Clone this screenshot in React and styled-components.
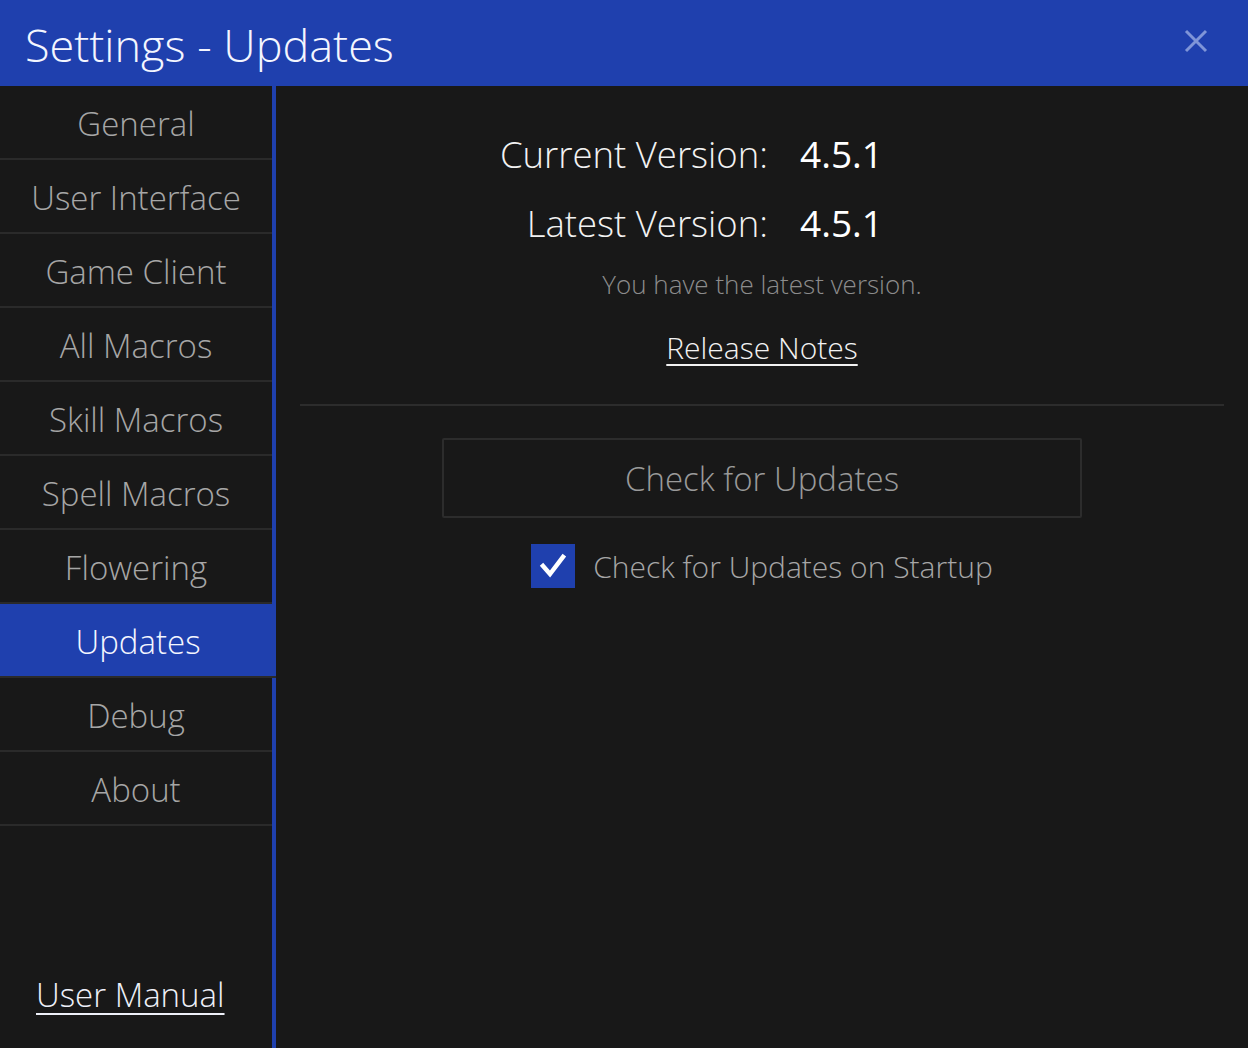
import { styled, createGlobalStyle } from "styled-components";

const GlobalStyle = createGlobalStyle`
  html, body {
    margin: 0;
    padding: 0;
    background: #181818;
  }
  body {
    font-family: "Open Sans", "Noto Sans", sans-serif;
    font-weight: 300;
  }
`;

const navItems = [
  "General",
  "User Interface",
  "Game Client",
  "All Macros",
  "Skill Macros",
  "Spell Macros",
  "Flowering",
  "Updates",
  "Debug",
  "About",
];

export default function App() {
  const active = "Updates";
  return (
    <Window>
      <GlobalStyle />
      <Header>
        <Title>Settings - Updates</Title>
        <CloseButton aria-label="close">
          <svg width="24" height="24" viewBox="0 0 24 24">
            <path
              d="M2 2 L22 22 M22 2 L2 22"
              stroke="#7f95d8"
              strokeWidth="3"
              fill="none"
            />
          </svg>
        </CloseButton>
      </Header>
      <Body>
        <Sidebar>
          <NavList>
            {navItems.map((item) => (
              <NavItem key={item} $active={item === active}>
                {item}
              </NavItem>
            ))}
          </NavList>
          <ManualLink>User Manual</ManualLink>
        </Sidebar>
        <Content>
          <Versions>
            <Label>Current Version:</Label>
            <Value>4.5.1</Value>
            <Label>Latest Version:</Label>
            <Value>4.5.1</Value>
          </Versions>
          <Status>You have the latest version.</Status>
          <NotesLink>Release Notes</NotesLink>
          <Divider />
          <CheckButton>Check for Updates</CheckButton>
          <CheckRow>
            <Box>
              <svg width="30" height="30" viewBox="0 0 30 30">
                <path
                  d="M5 15 L12 23 L25 6"
                  stroke="#ffffff"
                  strokeWidth="4.5"
                  fill="none"
                  strokeLinecap="square"
                />
              </svg>
            </Box>
            <CheckLabel>Check for Updates on Startup</CheckLabel>
          </CheckRow>
        </Content>
      </Body>
    </Window>
  );
}

const Window = styled.div`
  display: flex;
  flex-direction: column;
  width: 100vw;
  height: 100vh;
  overflow: hidden;
  background: #181818;
`;

const Header = styled.div`
  display: flex;
  align-items: center;
  justify-content: space-between;
  height: 86px;
  padding: 0 40px 0 25px;
  background: #1f40ae;
  flex-shrink: 0;
`;

const Title = styled.div`
  color: #f4f6ff;
  font-size: 45px;
  font-weight: 300;
  margin-top: 2px;
`;

const CloseButton = styled.div`
  display: flex;
  margin-top: -4px;
`;

const Body = styled.div`
  flex: 1;
  display: flex;
  min-height: 0;
`;

const Sidebar = styled.div`
  width: 272px;
  border-right: 4px solid #1f40ae;
  display: flex;
  flex-direction: column;
  justify-content: space-between;
`;

const NavList = styled.div`
  display: flex;
  flex-direction: column;
`;

const NavItem = styled.div`
  height: 74px;
  padding-top: 3px;
  box-sizing: border-box;
  display: flex;
  align-items: center;
  justify-content: center;
  font-size: 33px;
  font-weight: 300;
  color: ${(p) => (p.$active ? "#f4f6ff" : "#a6a6a6")};
  background: ${(p) => (p.$active ? "#1f40ae" : "transparent")};
  border-bottom: 2px solid #2a2a2a;
  margin-right: ${(p) => (p.$active ? "-4px" : "0")};
`;

const ManualLink = styled.a`
  color: #eef0f8;
  font-size: 33px;
  font-weight: 300;
  text-decoration: underline;
  text-underline-offset: 6px;
  text-decoration-thickness: 2px;
  padding: 0 0 31px 36px;
`;

const Content = styled.div`
  flex: 1;
  display: flex;
  flex-direction: column;
  align-items: center;
  padding: 42px 24px 0;
`;

const Versions = styled.div`
  align-self: stretch;
  display: grid;
  grid-template-columns: 468px 1fr;
  column-gap: 32px;
  row-gap: 18px;
  align-items: center;
`;

const Label = styled.div`
  text-align: right;
  color: #f2f2f2;
  font-size: 36.5px;
  font-weight: 300;
`;

const Value = styled.div`
  color: #ffffff;
  font-size: 37px;
  font-weight: 400;
`;

const Status = styled.div`
  margin-top: 18px;
  color: #8c8c8c;
  font-size: 26px;
  font-weight: 300;
`;

const NotesLink = styled.a`
  margin-top: 25px;
  color: #f2f2f2;
  font-size: 30px;
  font-weight: 300;
  text-decoration: underline;
  text-underline-offset: 5px;
  text-decoration-thickness: 2px;
`;

const Divider = styled.div`
  align-self: stretch;
  height: 2px;
  background: #2c2c2c;
  margin-top: 36px;
`;

const CheckButton = styled.div`
  margin-top: 32px;
  width: 636px;
  height: 76px;
  border: 2px solid #2c2c2c;
  border-radius: 2px;
  display: flex;
  align-items: center;
  justify-content: center;
  color: #9a9a9a;
  font-size: 33px;
  font-weight: 300;
`;

const CheckRow = styled.div`
  margin-top: 26px;
  display: flex;
  align-items: center;
  gap: 18px;
`;

const Box = styled.div`
  width: 44px;
  height: 44px;
  background: #1f40ae;
  display: flex;
  align-items: center;
  justify-content: center;
`;

const CheckLabel = styled.div`
  color: #a6a6a6;
  font-size: 30px;
  font-weight: 300;
`;
